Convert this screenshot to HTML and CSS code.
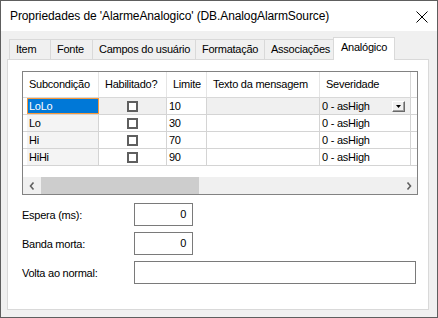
FILE: index.html
```html
<!DOCTYPE html>
<html lang="pt">
<head>
<meta charset="utf-8">
<title>Propriedades</title>
<link rel="stylesheet" href="styles.css">
</head>
<body>
<div class="window">
  <div class="titlebar">
    <span class="title">Propriedades de 'AlarmeAnalogico' (DB.AnalogAlarmSource)</span>
    <svg class="close" width="12" height="12" viewBox="0 0 12 12"><path d="M0.5 0.5 L11.5 11.5 M11.5 0.5 L0.5 11.5" stroke="#000" stroke-width="1" fill="none"/></svg>
  </div>
  <div class="client">
    <div class="tabs">
      <div class="tab t-item">Item</div>
      <div class="tab t-fonte">Fonte</div>
      <div class="tab t-campos">Campos do usuário</div>
      <div class="tab t-form">Formatação</div>
      <div class="tab t-assoc">Associações</div>
      <div class="tab active t-analog">Analógico</div>
    </div>
    <div class="panel">
      <div class="grid">
        <div class="hdr">
          <div class="h h-sub">Subcondição</div>
          <div class="h h-hab">Habilitado?</div>
          <div class="h h-lim">Limite</div>
          <div class="h h-txt">Texto da mensagem</div>
          <div class="h h-sev">Severidade</div>
          <div class="h h-end"></div>
        </div>
        <div class="row current">
          <div class="c c-rh"></div>
          <div class="c c-sub sel">LoLo</div>
          <div class="c c-hab"><span class="chk"></span></div>
          <div class="c c-lim">10</div>
          <div class="c c-txt"></div>
          <div class="c c-sev">0 - asHigh<span class="dd"><svg width="5" height="3" viewBox="0 0 5 3"><path d="M0 0H5L2.5 3Z" fill="#000"/></svg></span></div>
          <div class="c c-end"></div>
        </div>
        <div class="row">
          <div class="c c-rh"></div>
          <div class="c c-sub">Lo</div>
          <div class="c c-hab"><span class="chk"></span></div>
          <div class="c c-lim">30</div>
          <div class="c c-txt"></div>
          <div class="c c-sev">0 - asHigh</div>
          <div class="c c-end"></div>
        </div>
        <div class="row">
          <div class="c c-rh"></div>
          <div class="c c-sub">Hi</div>
          <div class="c c-hab"><span class="chk"></span></div>
          <div class="c c-lim">70</div>
          <div class="c c-txt"></div>
          <div class="c c-sev">0 - asHigh</div>
          <div class="c c-end"></div>
        </div>
        <div class="row">
          <div class="c c-rh"></div>
          <div class="c c-sub">HiHi</div>
          <div class="c c-hab"><span class="chk"></span></div>
          <div class="c c-lim">90</div>
          <div class="c c-txt"></div>
          <div class="c c-sev">0 - asHigh</div>
          <div class="c c-end"></div>
        </div>
        <div class="blank"></div>
        <div class="hscroll">
          <div class="sb-btn"><svg width="6" height="8" viewBox="0 0 6 8"><path d="M4.5 0.5 L1.5 4 L4.5 7.5" stroke="#606060" stroke-width="1.6" fill="none"/></svg></div>
          <div class="sb-track"><div class="sb-thumb"></div></div>
          <div class="sb-btn"><svg width="6" height="8" viewBox="0 0 6 8"><path d="M1.5 0.5 L4.5 4 L1.5 7.5" stroke="#606060" stroke-width="1.6" fill="none"/></svg></div>
        </div>
      </div>
      <div class="form">
        <div class="frow"><span class="lbl">Espera (ms):</span><div class="inp num">0</div></div>
        <div class="frow"><span class="lbl">Banda morta:</span><div class="inp num">0</div></div>
        <div class="frow"><span class="lbl">Volta ao normal:</span><div class="inp wide"></div></div>
      </div>
    </div>
  </div>
</div>
</body>
</html>
```
FILE: styles.css
```css
* { box-sizing: border-box; }
html, body { margin: 0; padding: 0; }
body {
  width: 438px;
  height: 318px;
  font-family: "Liberation Sans", Arial, sans-serif;
  font-size: 11px;
  letter-spacing: -0.25px;
  color: #000;
  background: #f0f0f0;
}
.window {
  width: 438px;
  height: 318px;
  border: 1px solid #5e5e5e;
  display: flex;
  flex-direction: column;
  background: #f0f0f0;
}
.titlebar {
  height: 30px;
  background: #fff;
  display: flex;
  align-items: center;
  justify-content: space-between;
  padding: 0 9px 0 9px;
  flex: none;
}
.title { font-size: 12px; letter-spacing: -0.1px; }
.close { display: block; margin-top: 1px; }
.client {
  flex: 1;
  padding: 6px 8px 0 6px;
}
.tabs {
  height: 22px;
  display: flex;
  align-items: flex-end;
  padding-left: 2px;
  position: relative;
  z-index: 1;
}
.tab {
  height: 20px;
  border: 1px solid #d9d9d9;
  border-bottom: none;
  background: #f0f0f0;
  margin-left: -1px;
  padding: 3px 0 0 6px;
  white-space: nowrap;
  flex: none;
}
.tab:first-child { margin-left: 0; }
.t-item { width: 42px; }
.t-fonte { width: 43px; }
.t-campos { width: 104px; }
.t-form { width: 70px; }
.t-assoc { width: 72px; }
.tab.active {
  width: 62px;
  height: 23px;
  margin-left: -3px;
  margin-bottom: -1px;
  background: #fff;
  padding-top: 3px;
  padding-left: 7px;
}
.panel {
  height: 251px;
  width: 422px;
  background: #fff;
  border: 1px solid #d9d9d9;
  padding: 11px 0 0 14px;
}
.grid {
  width: 396px;
  height: 124px;
  border: 1px solid #828282;
  display: flex;
  flex-direction: column;
}
.hdr {
  display: flex;
  height: 26px;
  border-bottom: 1px solid #d8d8d8;
  flex: none;
}
.h {
  border-right: 1px solid #e5e5e5;
  padding-left: 6px;
  line-height: 25px;
  white-space: nowrap;
  overflow: hidden;
  flex: none;
}
.h-sub { width: 76px; }
.h-hab { width: 68px; }
.h-lim { width: 40px; }
.h-txt { width: 113px; }
.h-sev { width: 91px; border-right-color: #d8d8d8; }
.h-end { flex: 1; border-right: none; }
.row {
  display: flex;
  height: 17px;
  border-bottom: 1px solid #d4d4d4;
  flex: none;
}
.c {
  border-right: 1px solid #d4d4d4;
  padding-left: 2px;
  line-height: 16px;
  white-space: nowrap;
  flex: none;
  position: relative;
}
.c-rh { width: 4px; border-right: none; padding: 0; }
.c-sub { width: 72px; background: #f4f4f4; }
.c-hab { width: 68px; display: flex; align-items: center; justify-content: center; padding: 0 1px 0 0; }
.c-lim { width: 40px; }
.c-txt { width: 113px; }
.c-sev { width: 91px; }
.c-end { flex: 1; border-right: none; }
.current .c-hab, .current .c-txt, .current .c-sev { background: #f0f0f0; }
.c-sub.sel {
  background: #0078d7;
  color: #fff;
  border: 1px solid #f7983a;
  padding-left: 1px;
  line-height: 14px;
}
.chk {
  display: block;
  width: 11px;
  height: 11px;
  border: 2px solid #5f5f5f;
  background: #fff;
  margin-top: 1px;
}
.dd {
  position: absolute;
  right: 5px;
  top: 3px;
  width: 13px;
  height: 11px;
  background: #f0f0f0;
  border: 1px solid;
  border-color: #fff #696969 #696969 #fff;
  box-shadow: inset -1px -1px 0 #a0a0a0;
  display: flex;
  align-items: center;
  justify-content: center;
}
.dd svg { display: block; }
.blank { height: 11px; flex: none; }
.hscroll {
  height: 17px;
  display: flex;
  background: #f0f0f0;
  flex: none;
}
.sb-btn {
  width: 17px;
  display: flex;
  align-items: center;
  justify-content: center;
  flex: none;
}
.sb-track { flex: 1; }
.sb-thumb { width: 158px; height: 17px; background: #cdcdcd; margin-left: 1px; }
.form { margin-top: 8px; }
.frow {
  display: flex;
  align-items: center;
  margin-bottom: 6px;
}
.lbl { width: 112px; flex: none; }
.inp {
  height: 23px;
  border: 1px solid #7a7a7a;
  background: #fff;
  line-height: 21px;
  flex: none;
}
.inp.num { width: 59px; text-align: right; padding-right: 6px; }
.inp.wide { width: 282px; }
```
